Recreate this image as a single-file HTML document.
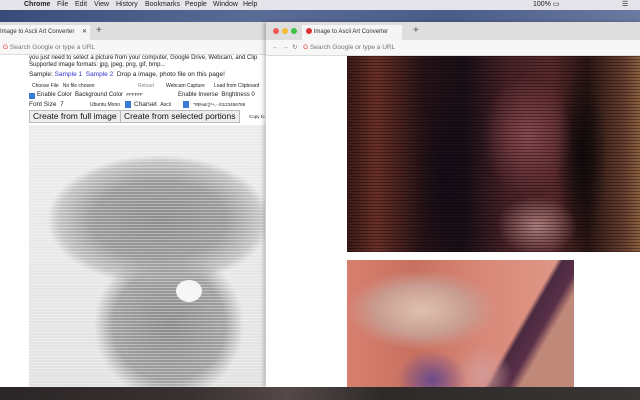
<!DOCTYPE html>
<html><head><meta charset="utf-8"><style>
*{margin:0;padding:0;box-sizing:border-box}
body{width:640px;height:400px;overflow:hidden;position:relative;font-family:"Liberation Sans",sans-serif;background:#2b3a66}
.abs{position:absolute}
.menubar{left:0;top:0;width:640px;height:10px;background:#e4e4ea;font-size:7px;color:#222;line-height:10px}
.menubar span{position:absolute;top:0}
.desk{left:0;top:10px;width:640px;height:12px;background:linear-gradient(90deg,#3a4a7a,#5a6c96 40%,#4a5c8a 70%,#6a7aa0)}
.dock{left:0;top:387px;width:640px;height:13px;background:linear-gradient(90deg,#2a2526,#3a3232 30%,#544848 45%,#2e2a2a 60%,#3a3535 100%)}
.tabbar{background:#dedede}
.tab{background:#f5f5f5;font-size:6px;color:#333;line-height:15px;padding-left:4px}
.toolbar{background:#f7f7f7;border-bottom:1px solid #ddd;font-size:6.5px;color:#777;line-height:15px}
.t{font-size:5.5px;color:#222;white-space:nowrap;position:absolute}
.btn{position:absolute;background:#eee;border:1px solid #bbb;font-size:8.5px;color:#111;line-height:11px;padding:0 3px;white-space:nowrap}
</style></head><body>
<div class="abs menubar">
<span style="left:11px;font-weight:bold"></span>
<span style="left:24px;font-weight:bold">Chrome</span>
<span style="left:57px">File</span><span style="left:75px">Edit</span><span style="left:94px">View</span>
<span style="left:116px">History</span><span style="left:145px">Bookmarks</span><span style="left:185px">People</span>
<span style="left:213px">Window</span><span style="left:243px">Help</span>
<span style="left:533px">100% ▭</span><span style="left:622px">☰</span>
</div>
<div class="abs desk"></div>

<div class="abs tabbar" style="left:0;top:22px;width:268px;height:18px"></div>
<div class="abs tab" style="left:0;top:25px;width:90px;height:15px;padding-left:0">Image to Ascii Art Converter <span style="margin-left:6px">✕</span></div>
<div class="abs" style="left:96px;top:25px;font-size:10px;color:#555">+</div>
<div class="abs toolbar" style="left:0;top:40px;width:268px;height:15px"><span style="color:#e33;margin-left:3px">G</span> Search Google or type a URL</div>
<div class="abs" style="left:0;top:55px;width:266px;height:332px;background:#fff"></div>
<div class="t" style="left:29px;top:55px;font-size:6px">you just need to select a picture from your computer, Google Drive, Webcam, and Clip</div>
<div class="t" style="left:29px;top:62px;font-size:6px">Supported image formats: jpg, jpeg, png, gif, bmp...</div>
<div class="t" style="left:29px;top:71px;font-size:6.5px">Sample: <span style="color:#33c">Sample 1</span> &nbsp;<span style="color:#33c">Sample 2</span> &nbsp;Drop a image, photo file on this page!</div>
<div class="t" style="left:32px;top:83px;font-size:5px">Choose File &nbsp; No file chosen</div>
<div class="t" style="left:138px;top:83px;font-size:5px;color:#888">Reload</div>
<div class="t" style="left:166px;top:83px;font-size:5px">Webcam Capture</div>
<div class="t" style="left:214px;top:83px;font-size:5px">Load from Clipboard</div>
<div class="abs" style="left:29px;top:93px;width:6px;height:6px;background:#3a7bd5"></div>
<div class="t" style="left:37px;top:92px;font-size:6px">Enable Color &nbsp;Background Color &nbsp;<span style="font-size:4.5px">FFFFFF</span></div>
<div class="t" style="left:178px;top:92px;font-size:6px">Enable Inverse &nbsp;Brightness 0</div>
<div class="t" style="left:29px;top:101px;font-size:6.5px">Font Size &nbsp;7</div>
<div class="t" style="left:90px;top:102px;font-size:5px">Ubuntu Mono</div>
<div class="abs" style="left:125px;top:101px;width:6px;height:7px;background:#3a7bd5"></div>
<div class="t" style="left:134px;top:101px;font-size:6.5px">Charset &nbsp;<span style="font-size:5px">Ascii</span></div>
<div class="abs" style="left:183px;top:101px;width:6px;height:7px;background:#3a7bd5"></div>
<div class="t" style="left:193px;top:102px;font-size:4.5px">"#$%&amp;'()*+,-./0123456789</div>
<div class="btn" style="left:29px;top:110px">Create from full image</div>
<div class="btn" style="left:120px;top:110px">Create from selected portions</div>
<div class="t" style="left:249px;top:114px;font-size:4.5px">Copy to</div>
<div class="abs" style="left:29px;top:125px;width:236px;height:262px;background:
radial-gradient(ellipse 112px 65px at 130px 95px,#8c8c8c,#999 60%,rgba(170,170,170,.6) 90%,transparent 100%),
radial-gradient(ellipse 75px 75px at 140px 200px,#8a8a8a,#a0a0a0 75%,transparent 100%),
linear-gradient(#ececec,#e2e2e2)"></div>
<div class="abs" style="left:29px;top:125px;width:236px;height:262px;background:repeating-linear-gradient(0deg,rgba(255,255,255,.35) 0 1px,transparent 1px 3px)"></div>
<div class="abs" style="left:176px;top:280px;width:26px;height:22px;border-radius:50%;background:#f6f6f6"></div>

<div class="abs" style="left:266px;top:22px;width:374px;height:365px;background:#fff;box-shadow:-2px 0 4px rgba(0,0,0,.25)"></div>
<div class="abs tabbar" style="left:266px;top:22px;width:374px;height:18px"></div>
<div class="abs" style="left:273px;top:28px;width:6px;height:6px;border-radius:50%;background:#ee5a52"></div>
<div class="abs" style="left:282px;top:28px;width:6px;height:6px;border-radius:50%;background:#f5bd31"></div>
<div class="abs" style="left:291px;top:28px;width:6px;height:6px;border-radius:50%;background:#3dc246"></div>
<div class="abs tab" style="left:302px;top:25px;width:100px;height:15px"><span style="display:inline-block;width:6px;height:6px;border-radius:50%;background:#d33;vertical-align:-1px"></span> Image to Ascii Art Converter <span style="margin-left:8px">✕</span></div>
<div class="abs" style="left:413px;top:25px;font-size:10px;color:#555">+</div>
<div class="abs toolbar" style="left:266px;top:40px;width:374px;height:16px;padding-left:6px">←&nbsp; → &nbsp;↻ &nbsp;&nbsp;<span style="color:#e33">G</span> Search Google or type a URL</div>
<div class="abs" style="left:347px;top:56px;width:293px;height:196px;background:
radial-gradient(ellipse 45px 60px at 180px 80px,#8a4a50,transparent 100%),
radial-gradient(ellipse 40px 30px at 190px 170px,#b08080,transparent 100%),
radial-gradient(ellipse 30px 90px at 100px 120px,#140c18,transparent 100%),
radial-gradient(ellipse 25px 90px at 235px 100px,#100a0c,transparent 100%),
linear-gradient(90deg,#3a1a18 0,#6a3028 10%,#2a1418 25%,#1a1018 40%,#4a2228 55%,#5a2a2c 70%,#2a1614 82%,#6a4030 95%,#8a6040)"></div>
<div class="abs" style="left:347px;top:56px;width:293px;height:196px;background:repeating-linear-gradient(0deg,rgba(0,0,0,.35) 0 1px,transparent 1px 3px)"></div>
<div class="abs" style="left:347px;top:260px;width:227px;height:127px;background:
radial-gradient(ellipse 75px 40px at 75px 50px,#e0c0b0,#c89e92 60%,transparent 100%),
radial-gradient(ellipse 35px 30px at 85px 120px,#6a4a8a,transparent 100%),
radial-gradient(ellipse 30px 30px at 135px 115px,#d49a98,transparent 100%),
linear-gradient(120deg,transparent 70%,#4a2a40 72%,#5a3048 78%,#c08878 82%),
linear-gradient(90deg,#d88070,#c87060 30%,#d88878 60%,#e09a88)"></div>
<div class="abs dock"></div>
</body></html>
